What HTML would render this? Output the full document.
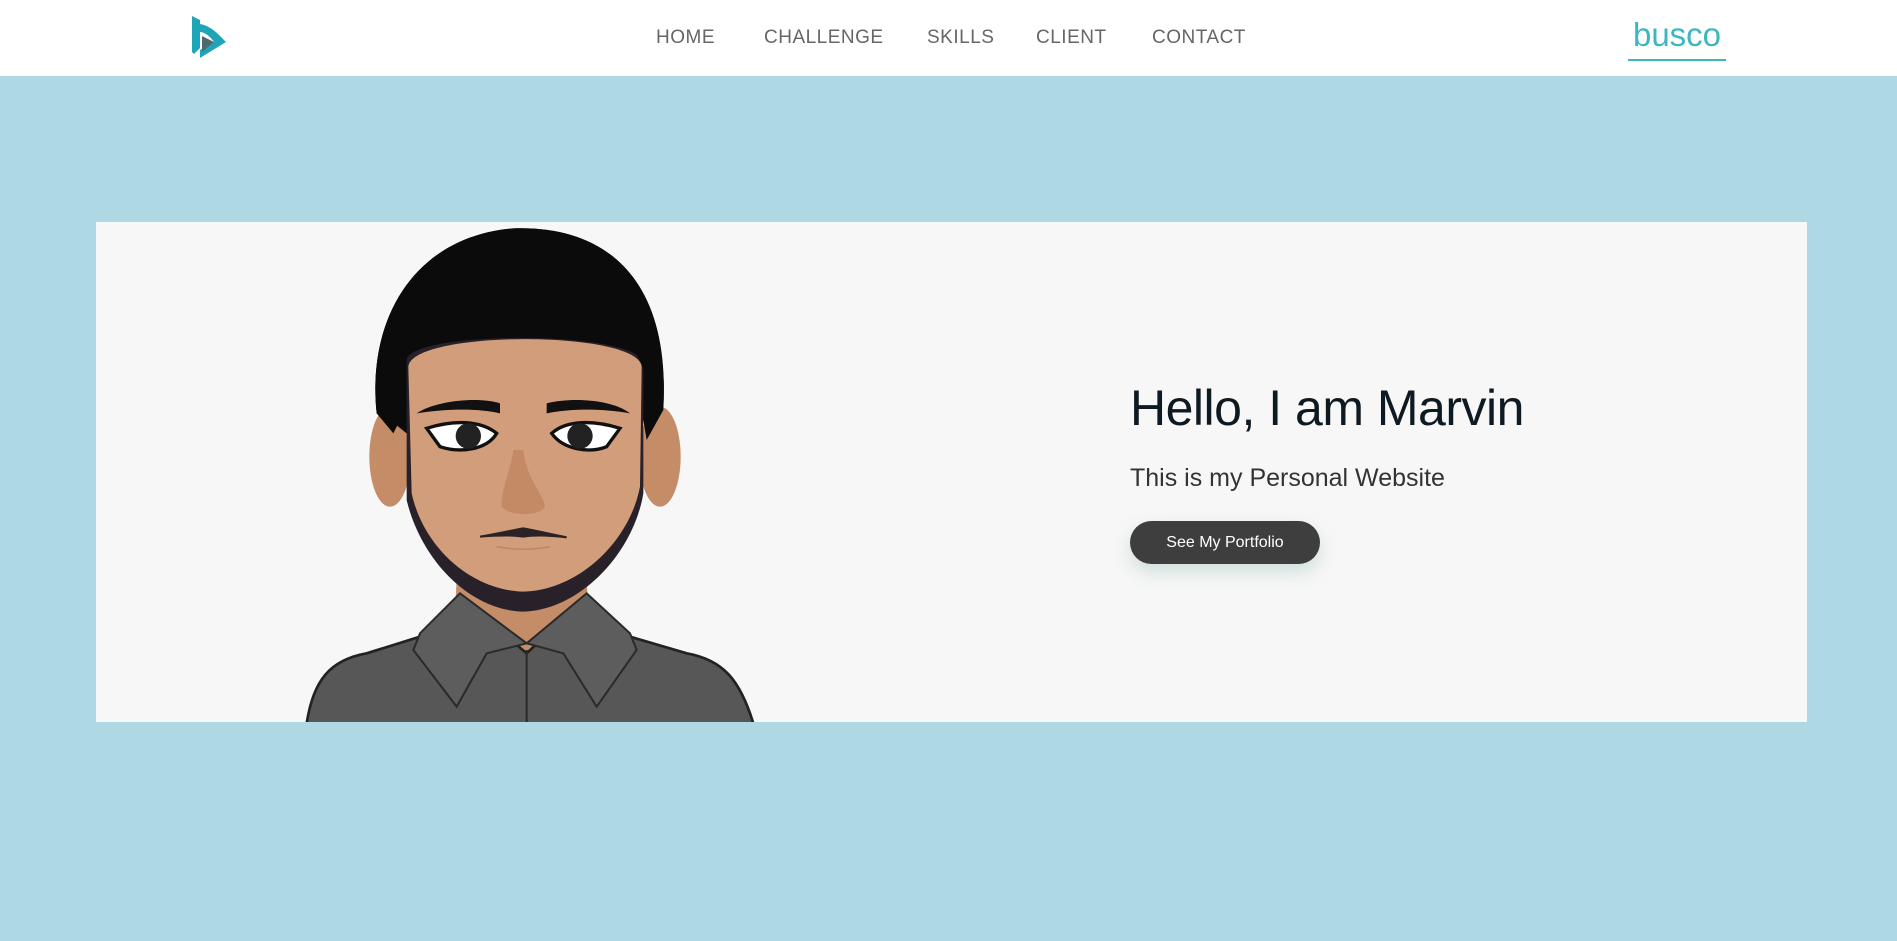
<!DOCTYPE html>
<html><head><meta charset="utf-8"><style>
*{margin:0;padding:0;box-sizing:border-box}
body{width:1897px;height:941px;background:#add8e4;font-family:"Liberation Sans",sans-serif;position:relative;overflow:hidden}
header{position:absolute;left:0;top:0;width:1897px;height:76px;background:#fff}
nav a{position:absolute;top:27px;font-size:19px;color:#666;text-decoration:none;letter-spacing:0.5px;font-weight:300}
.busco{position:absolute;left:1628px;top:16px;font-size:33px;color:#3bb7bd;width:98px;text-align:center}
.ul{position:absolute;left:1628px;top:59px;width:98px;height:2px;background:#3bb7bd}
.card{position:absolute;left:96px;top:222px;width:1711px;height:500px;background:#f7f7f7;overflow:hidden}
h1{position:absolute;left:1130px;top:379px;font-size:50px;font-weight:400;color:#0e1a22;letter-spacing:-0.5px}
p{position:absolute;left:1130px;top:464px;font-size:25px;color:#333;font-weight:300}
.btn{position:absolute;left:1130px;top:521px;width:190px;height:43px;border-radius:22px;background:#3d3e3d;color:#fff;font-size:16px;text-align:center;line-height:43px;box-shadow:0 8px 18px rgba(120,170,160,0.3)}
</style></head><body>
<header>
<svg style="position:absolute;left:190px;top:14px" width="40" height="46" viewBox="0 0 40 46">
<path d="M2,2 L10,6 L10,34 L4,40 L2,38 Z" fill="#1ea6b8"/>
<path d="M10,10 C22,12 30,22 36,28 L10,44 L10,36 L24,28 C20,22 14,18 10,18 Z" fill="#1ea6b8"/>
<path d="M12,22 L24,28 L12,38 Z" fill="#4e6a70"/>
</svg>
<nav>
<a style="left:656px">HOME</a>
<a style="left:764px">CHALLENGE</a>
<a style="left:927px">SKILLS</a>
<a style="left:1036px">CLIENT</a>
<a style="left:1152px">CONTACT</a>
</nav>
<div class="busco">busco</div><div class="ul"></div>
</header>
<div class="card"></div>
<svg style="position:absolute;left:280px;top:222px" width="490" height="500" viewBox="0 6 1470 1500">
<path d="M530,1080 L920,1080 L930,1270 L740,1310 L520,1270 Z" fill="#c48c67"/>
<path d="M80,1510 C100,1380 150,1320 260,1300 L420,1250 L540,1130 L740,1300 L920,1130 L1050,1250 L1220,1300 C1330,1320 1380,1380 1420,1510 Z" fill="#575757" stroke="#222" stroke-width="8"/>
<path d="M540,1120 L420,1240 L400,1290 L530,1460 L620,1300 L740,1270 Z" fill="#5d5d5d" stroke="#2a2a2a" stroke-width="6"/>
<path d="M920,1120 L1050,1240 L1070,1290 L950,1460 L850,1300 L740,1270 Z" fill="#5d5d5d" stroke="#2a2a2a" stroke-width="6"/>
<line x1="740" y1="1290" x2="740" y2="1510" stroke="#2a2a2a" stroke-width="6"/>
<ellipse cx="330" cy="710" rx="62" ry="150" fill="#c48c67"/>
<ellipse cx="1140" cy="710" rx="62" ry="150" fill="#c48c67"/>
<path d="M290,580 C260,300 400,50 700,25 C1000,15 1170,200 1150,570 L1100,660 L1090,600 L380,640 L330,600 Z" fill="#0b0b0b"/>
<path d="M380,420 C390,330 1080,330 1090,430 L1090,820 C1060,1000 900,1170 730,1175 C560,1170 420,1010 380,840 Z" fill="#28212a"/>
<path d="M385,440 C395,330 1075,330 1085,440 L1080,800 C1050,960 900,1110 730,1115 C570,1110 430,980 395,820 Z" fill="#d29d7b"/>
<path d="M330,420 C380,300 560,240 760,260 C960,280 1060,330 1100,480 L1150,560 C1170,200 1000,15 700,25 C400,50 260,300 290,580 L340,640 L380,560 Z" fill="#0b0b0b"/>
<path d="M410,580 C470,540 600,530 660,550 L660,580 C600,565 500,565 410,580 Z" fill="#111"/>
<path d="M800,550 C880,530 1000,540 1050,580 C970,565 870,565 800,580 Z" fill="#111"/>
<path d="M440,625 C520,600 600,600 650,640 C620,690 540,700 480,680 Z" fill="#fff" stroke="#111" stroke-width="10"/>
<circle cx="565" cy="648" r="38" fill="#222"/>
<path d="M1020,625 C940,600 860,600 815,640 C850,690 930,700 980,680 Z" fill="#fff" stroke="#111" stroke-width="10"/>
<circle cx="900" cy="648" r="38" fill="#222"/>
<path d="M700,690 C690,760 660,820 665,860 C690,890 780,890 795,860 C790,820 740,780 730,690 Z" fill="#c48a66"/>
<path d="M600,950 C660,940 700,930 730,925 C760,930 800,940 860,952 C800,945 760,945 730,950 C700,945 660,945 600,950 Z" fill="#2b2226" stroke="#2b2226" stroke-width="6"/>
<path d="M650,980 C700,990 760,990 810,980" stroke="#b98564" stroke-width="4" fill="none"/>
</svg>
<h1>Hello, I am Marvin</h1>
<p>This is my Personal Website</p>
<div class="btn">See My Portfolio</div>
</body></html>
